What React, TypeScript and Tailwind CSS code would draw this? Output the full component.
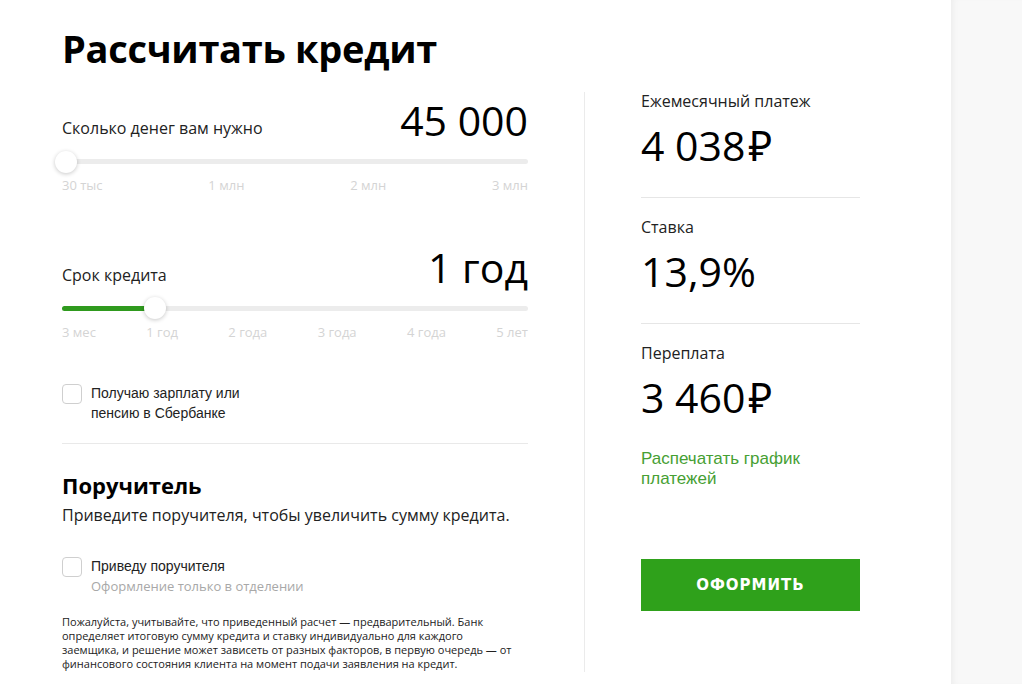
const sans = "font-['Open_Sans','Noto_Sans',sans-serif]";
const arial = "font-['Liberation_Sans',Arial,sans-serif]";

const Thumb = ({ left }: { left: string }) => (
  <div
    className="absolute top-1/2 h-[22px] w-[22px] -translate-x-1/2 -translate-y-1/2 rounded-full bg-white shadow-[0_1px_4px_rgba(0,0,0,0.22)]"
    style={{ left }}
  />
);

const Slider = ({ label, value, fill, thumb, ticks }: { label: string; value: string; fill: string; thumb: string; ticks: string[] }) => (
  <div>
    <div className="flex items-end justify-between">
      <span className={`${sans} mb-[3px] text-[16px] text-[#222]`}>{label}</span>
      <span className={`${sans} text-[41px] leading-[46px] font-normal text-black`}>{value}</span>
    </div>
    <div className="relative mt-[16px] h-[5px] rounded-full bg-[#ececec]">
      <div className="absolute left-0 top-0 h-full rounded-l-full bg-[#2f9a1e]" style={{ width: fill }} />
      <Thumb left={thumb} />
    </div>
    <div className={`${sans} mt-[12px] flex justify-between text-[13px] text-[#d4d4d4]`}>
      {ticks.map((t) => (
        <span key={t}>{t}</span>
      ))}
    </div>
  </div>
);

const Check = ({ children }: { children: React.ReactNode }) => (
  <div className="flex items-start gap-[9px]">
    <div className="mt-[1px] h-[20px] w-[20px] shrink-0 rounded-[4px] border border-[#cfcfcf] bg-white" />
    <div>{children}</div>
  </div>
);

const Rub = ({ n }: { n: string }) => (
  <>
    {n}
    <span className="ml-[3px]">₽</span>
  </>
);

const Stat = ({ label, value, line = true }: { label: string; value: React.ReactNode; line?: boolean }) => (
  <div className={line ? 'border-b border-[#e6e6e6] pb-[29px]' : ''}>
    <div className={`${sans} text-[16px] leading-[22px] text-[#222]`}>{label}</div>
    <div className={`${sans} mt-[10px] text-[41px] leading-[46px] font-normal text-black`}>{value}</div>
  </div>
);

export default function App() {
  return (
    <div className="flex h-[684px] w-full overflow-hidden bg-white">
      <div className="flex w-[951px] shrink-0 pl-[62px]">
        <div className="w-[466px] shrink-0">
          <h1 className={`${sans} mt-[24px] text-[38px] leading-[48px] font-bold tracking-[-0.3px] text-black`}>
            Рассчитать кредит
          </h1>
          <div className="mt-[25px]">
            <Slider
              label="Сколько денег вам нужно"
              value="45 000"
              fill="0px"
              thumb="4px"
              ticks={['30 тыс', '1 млн', '2 млн', '3 млн']}
            />
          </div>
          <div className="mt-[48px]">
            <Slider
              label="Срок кредита"
              value="1 год"
              fill="93px"
              thumb="93px"
              ticks={['3 мес', '1 год', '2 года', '3 года', '4 года', '5 лет']}
            />
          </div>
          <div className="mt-[41px] border-b border-[#e9e9e9] pb-[20px]">
            <Check>
              <p className={`${arial} text-[14px] leading-[20px] text-[#222]`}>
                Получаю зарплату или
                <br />
                пенсию в Сбербанке
              </p>
            </Check>
          </div>
          <h2 className={`${sans} mt-[26px] text-[22px] leading-[30px] font-bold text-black`}>Поручитель</h2>
          <p className={`${sans} mt-[4px] text-[16px] leading-[22px] text-[#222]`}>
            Приведите поручителя, чтобы увеличить сумму кредита.
          </p>
          <div className="mt-[30px]">
            <Check>
              <p className={`${arial} text-[14px] leading-[20px] text-[#222]`}>Приведу поручителя</p>
              <p className={`${sans} text-[13px] leading-[20px] text-[#a8a8a8]`}>Оформление только в отделении</p>
            </Check>
          </div>
          <p className={`${sans} mt-[19px] text-[11px] leading-[14px] text-[#222]`}>
            Пожалуйста, учитывайте, что приведенный расчет — предварительный. Банк
            <br />
            определяет итоговую сумму кредита и ставку индивидуально для каждого
            <br />
            заемщика, и решение может зависеть от разных факторов, в первую очередь — от
            <br />
            финансового состояния клиента на момент подачи заявления на кредит.
          </p>
        </div>
        <div className="ml-[56px] mt-[92px] mb-[12px] w-px shrink-0 bg-[#ebebeb]" />
        <div className="ml-[56px] w-[219px] shrink-0 pt-[90px]">
          <Stat label="Ежемесячный платеж" value={<Rub n="4 038" />} />
          <div className="mt-[18px]">
            <Stat label="Ставка" value="13,9%" />
          </div>
          <div className="mt-[18px]">
            <Stat label="Переплата" value={<Rub n="3 460" />} line={false} />
          </div>
          <a className={`${arial} mt-[29px] block text-[17px] leading-[20px] text-[#46a033]`}>
            Распечатать график
            <br />
            платежей
          </a>
          <button
            className={`mt-[70px] h-[52px] w-full bg-[#2fa11b] text-[15px] font-bold tracking-[1px] text-white font-['DejaVu_Sans',Verdana,sans-serif]`}
          >
            ОФОРМИТЬ
          </button>
        </div>
      </div>
      <div className="flex-1 bg-[#f8f8f8] shadow-[inset_6px_0_6px_-4px_rgba(0,0,0,0.05)]" />
    </div>
  );
}
